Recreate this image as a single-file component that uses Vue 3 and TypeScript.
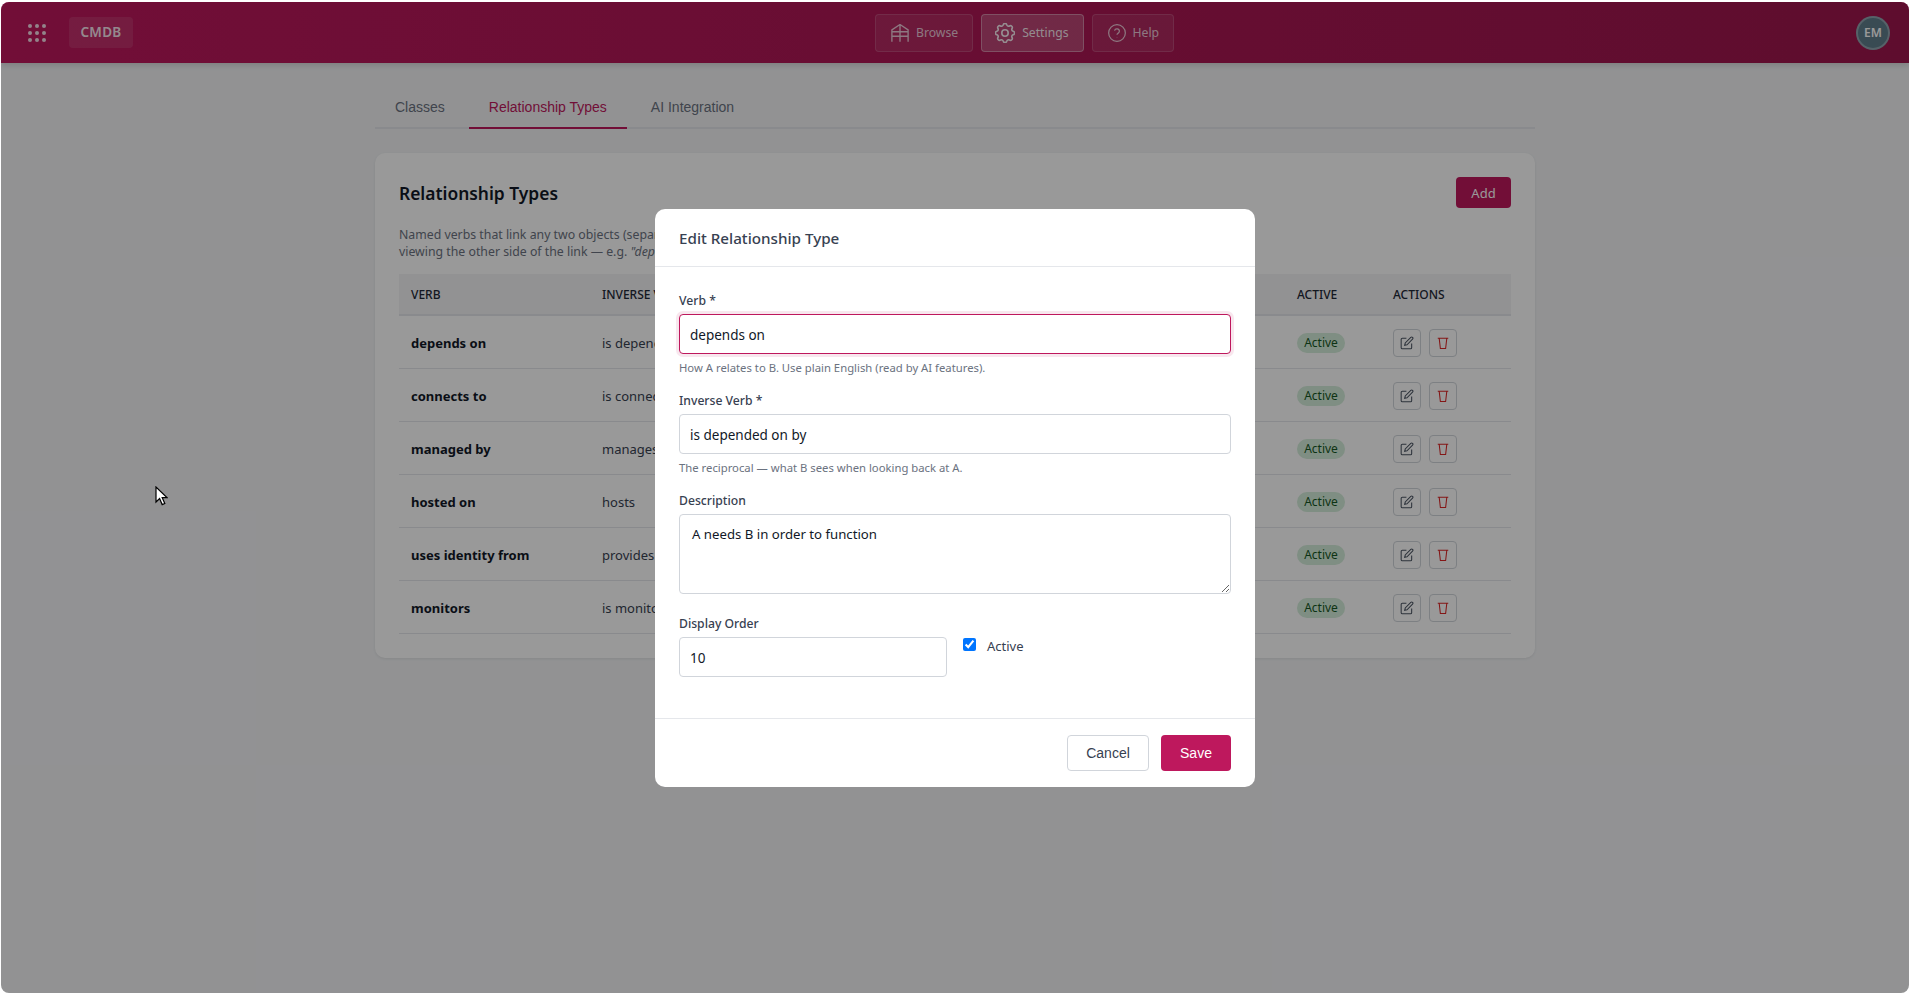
<script setup lang="ts">
import { ref } from 'vue'

interface RelType {
  verb: string
  inverse: string
  description: string
  order: number
}

const relTypes: RelType[] = [
  { verb: 'depends on', inverse: 'is depended on by', description: 'A needs B in order to function', order: 10 },
  { verb: 'connects to', inverse: 'is connected from', description: 'A has a network link to B', order: 20 },
  { verb: 'managed by', inverse: 'manages', description: 'A is administered by B', order: 30 },
  { verb: 'hosted on', inverse: 'hosts', description: 'A runs on B', order: 40 },
  { verb: 'uses identity from', inverse: 'provides identity for', description: 'A signs in through B', order: 50 },
  { verb: 'monitors', inverse: 'is monitored by', description: 'A watches B', order: 60 }
]

const tabs = ['Classes', 'Relationship Types', 'AI Integration']
const dots = Array.from({ length: 9 }, (_, i) => i)

const verb = ref('depends on')
const inverse = ref('is depended on by')
const description = ref('A needs B in order to function')
const displayOrder = ref(10)
const active = ref(true)
</script>

<template>
  <div class="frame">
    <header class="topbar">
      <div class="apps">
        <span v-for="d in dots" :key="d" class="dot"></span>
      </div>
      <div class="brand">CMDB</div>
      <nav class="nav">
        <a class="nav-item">
          <svg class="nav-icon" viewBox="2.4 2.4 19.2 20">
            <path d="M3 22V9l9-6 9 6v13M12 3v19M3 11h18M3 16h18" />
          </svg>
          Browse
        </a>
        <a class="nav-item current">
          <svg class="nav-icon big" viewBox="2.6 2.6 18.8 18.8">
            <path d="M10.325 4.317c.426-1.756 2.924-1.756 3.35 0a1.724 1.724 0 0 0 2.573 1.066c1.543-.94 3.31.826 2.37 2.37a1.724 1.724 0 0 0 1.065 2.572c1.756.426 1.756 2.924 0 3.35a1.724 1.724 0 0 0-1.066 2.573c.94 1.543-.826 3.31-2.37 2.37a1.724 1.724 0 0 0-2.572 1.065c-.426 1.756-2.924 1.756-3.35 0a1.724 1.724 0 0 0-2.573-1.066c-1.543.94-3.31-.826-2.37-2.37a1.724 1.724 0 0 0-1.065-2.572c-1.756-.426-1.756-2.924 0-3.35a1.724 1.724 0 0 0 1.066-2.573c-.94-1.543.826-3.31 2.37-2.37.996.608 2.296.07 2.572-1.065z" />
            <circle cx="12" cy="12" r="3" />
          </svg>
          Settings
        </a>
        <a class="nav-item">
          <svg class="nav-icon" viewBox="1 1 22 22">
            <circle cx="12" cy="12" r="10.2" />
            <path d="M9 9.2a3 3 0 0 1 5.9.8c0 2-2.9 2.6-2.9 4.2M12 17.4v.4" />
          </svg>
          Help
        </a>
      </nav>
      <div class="avatar">EM</div>
    </header>

    <main class="content">
      <div class="tabs">
        <button v-for="t in tabs" :key="t" class="tab" :class="{ on: t === 'Relationship Types' }">{{ t }}</button>
      </div>

      <section class="card">
        <div class="card-head">
          <h2>Relationship Types</h2>
          <button class="add-btn">Add</button>
        </div>
        <p class="card-desc">
          Named verbs that link any two objects (separate from class rules). Each verb has an inverse, used when<br />
          viewing the other side of the link — e.g. <em>"depends on"</em> and <em>"is depended on by"</em>.
        </p>
        <table class="types">
          <colgroup>
            <col class="c-verb" />
            <col class="c-inverse" />
            <col />
            <col class="c-order" />
            <col class="c-active" />
            <col class="c-actions" />
          </colgroup>
          <thead>
            <tr>
              <th>Verb</th>
              <th>Inverse Verb</th>
              <th>Description</th>
              <th>Order</th>
              <th>Active</th>
              <th>Actions</th>
            </tr>
          </thead>
          <tbody>
            <tr v-for="r in relTypes" :key="r.verb">
              <td class="verb">{{ r.verb }}</td>
              <td>{{ r.inverse }}</td>
              <td>{{ r.description }}</td>
              <td>{{ r.order }}</td>
              <td><span class="badge">Active</span></td>
              <td>
                <div class="row-actions">
                  <button class="icon-btn">
                    <svg viewBox="0 0 24 24">
                      <path d="M11 4H4a2 2 0 0 0-2 2v14a2 2 0 0 0 2 2h14a2 2 0 0 0 2-2v-7" />
                      <path d="M18.5 2.5a2.121 2.121 0 0 1 3 3L12 15l-4 1 1-4 9.5-9.5z" />
                    </svg>
                  </button>
                  <button class="icon-btn danger">
                    <svg viewBox="0 0 24 24">
                      <path d="M3 4h18M5.5 4l2 17.5h9l2-17.5" />
                    </svg>
                  </button>
                </div>
              </td>
            </tr>
          </tbody>
        </table>
      </section>
    </main>

    <div class="overlay">
      <div class="modal">
        <div class="modal-head">Edit Relationship Type</div>
        <div class="modal-body">
          <div class="field">
            <label>Verb *</label>
            <input v-model="verb" class="input focus" type="text" />
            <small>How A relates to B. Use plain English (read by AI features).</small>
          </div>
          <div class="field">
            <label>Inverse Verb *</label>
            <input v-model="inverse" class="input" type="text" />
            <small>The reciprocal — what B sees when looking back at A.</small>
          </div>
          <div class="field">
            <label>Description</label>
            <textarea v-model="description" class="input area"></textarea>
          </div>
          <div class="split">
            <div class="field">
              <label>Display Order</label>
              <input v-model="displayOrder" class="input" type="text" />
            </div>
            <label class="check">
              <input v-model="active" type="checkbox" />
              <span>Active</span>
            </label>
          </div>
        </div>
        <div class="modal-foot">
          <button class="btn ghost">Cancel</button>
          <button class="btn primary">Save</button>
        </div>
      </div>
    </div>

    <svg class="cursor" viewBox="0 0 13 20">
      <path d="M1 1v15l3.6-3.4 2.6 6 2.6-1.1-2.6-5.8h5z" />
    </svg>
  </div>
</template>

<style>
html,
body {
  margin: 0;
  height: 100%;
  background: #fff;
}
</style>

<style scoped>
.frame {
  position: fixed;
  top: 2px;
  left: 1px;
  right: 1px;
  bottom: 0;
  overflow: hidden;
  border-radius: 8px;
  background: #f3f4f6;
  font-family: "Noto Sans", "Open Sans", sans-serif;
  color: #374151;
}

.topbar {
  height: 61px;
  display: flex;
  align-items: center;
  padding: 0 19px 0 27px;
  background: linear-gradient(90deg, #be185d, #9d174d);
  box-shadow: 0 2px 6px rgba(0, 0, 0, 0.15);
  color: #fff;
}

.apps {
  width: 18px;
  display: grid;
  grid-template-columns: repeat(3, 4px);
  gap: 3px;
}

.dot {
  width: 4px;
  height: 4px;
  border-radius: 50%;
  background: rgba(255, 255, 255, 0.85);
}

.brand {
  margin-left: 23px;
  width: 64px;
  height: 31px;
  line-height: 31px;
  text-align: center;
  border-radius: 4px;
  background: rgba(255, 255, 255, 0.1);
  font-size: 13.5px;
  font-weight: 600;
  letter-spacing: 0.3px;
  color: rgba(255, 255, 255, 0.9);
}

.nav {
  margin-left: 742px;
  display: flex;
  gap: 8px;
}

.nav-item {
  height: 38px;
  box-sizing: border-box;
  display: flex;
  align-items: center;
  gap: 7px;
  padding: 0 14px 0 15px;
  border: 1px solid rgba(255, 255, 255, 0.15);
  border-radius: 4px;
  background: rgba(255, 255, 255, 0.08);
  font-size: 12.2px;
  color: rgba(255, 255, 255, 0.75);
}

.nav-item.current {
  padding: 0 14px 0 13px;
  background: rgba(255, 255, 255, 0.2);
  border-color: rgba(255, 255, 255, 0.35);
  color: rgba(255, 255, 255, 0.9);
}

.nav-icon {
  width: 18px;
  height: 18px;
  fill: none;
  stroke: currentColor;
  stroke-width: 1.5;
}

.nav-icon.big {
  width: 20px;
  height: 20px;
}

.avatar {
  margin-left: auto;
  width: 34px;
  height: 34px;
  box-sizing: border-box;
  display: flex;
  align-items: center;
  justify-content: center;
  border-radius: 50%;
  border: 2px solid rgba(255, 255, 255, 0.3);
  background: #607d8b;
  font-size: 12px;
  font-weight: 600;
  color: #fff;
}

.content {
  width: 1160px;
  margin: 0 auto;
  padding-top: 24px;
}

.tabs {
  display: flex;
  gap: 4px;
  border-bottom: 2px solid #e5e7eb;
  margin-bottom: 24px;
}

.tab {
  padding: 12px 20px;
  margin-bottom: -2px;
  border: 0;
  border-bottom: 2px solid transparent;
  background: none;
  line-height: 16px;
  font-family: "Liberation Sans", Arial, sans-serif;
  font-size: 14px;
  color: #6b7280;
}

.tab.on {
  color: #be185d;
  border-bottom-color: #be185d;
}

.card {
  background: #fff;
  border-radius: 10px;
  padding: 24px;
  box-shadow: 0 1px 3px rgba(0, 0, 0, 0.08);
}

.card-head {
  display: flex;
  justify-content: space-between;
  align-items: flex-start;
}

.card-head h2 {
  margin: 0 0 1px;
  font-size: 17.4px;
  line-height: 33px;
  font-weight: 600;
  color: #111827;
}

.add-btn {
  width: 55px;
  height: 31px;
  border: 0;
  border-radius: 4px;
  background: #be185d;
  font-family: inherit;
  font-size: 13px;
  color: #fff;
}

.card-desc {
  margin: 15px 0 14px;
  max-width: 850px;
  font-size: 12.3px;
  line-height: 17px;
  color: #6b7280;
  white-space: nowrap;
}

.types {
  width: 100%;
  table-layout: fixed;
  border-collapse: collapse;
}

.c-verb {
  width: 191px;
}

.c-inverse {
  width: 200px;
}

.c-order {
  width: 100px;
}

.c-active {
  width: 96px;
}

.c-actions {
  width: 130px;
}

.types th {
  height: 40px;
  padding: 0 12px;
  text-align: left;
  background: #f3f4f6;
  border-bottom: 2px solid #e5e7eb;
  font-size: 12px;
  font-weight: 500;
  text-transform: uppercase;
  color: #1f2937;
}

.types td {
  height: 50px;
  padding: 2px 12px 0;
  border-bottom: 1px solid #e5e7eb;
  font-size: 13px;
  white-space: nowrap;
  overflow: hidden;
}

.types td.verb {
  font-weight: 700;
  color: #111827;
}

.badge {
  display: inline-block;
  width: 48px;
  height: 20px;
  line-height: 20px;
  text-align: center;
  border-radius: 10px;
  background: #d4edda;
  font-size: 12px;
  color: #155724;
}

.row-actions {
  display: flex;
  gap: 8px;
}

.icon-btn {
  width: 28px;
  height: 28px;
  padding: 0;
  display: flex;
  align-items: center;
  justify-content: center;
  border: 1px solid #d1d5db;
  border-radius: 4px;
  background: transparent;
  color: #4b5563;
}

.icon-btn svg {
  width: 14px;
  height: 14px;
  fill: none;
  stroke: currentColor;
  stroke-width: 1.8;
}

.icon-btn.danger {
  color: #dc2626;
}

.overlay {
  position: absolute;
  inset: 0;
  display: flex;
  align-items: center;
  justify-content: center;
  background: rgba(0, 0, 0, 0.4);
}

.modal {
  width: 600px;
  height: 578px;
  display: flex;
  flex-direction: column;
  background: #fff;
  border-radius: 10px;
}

.modal-head {
  height: 58px;
  box-sizing: border-box;
  padding: 0 24px;
  line-height: 58px;
  border-bottom: 1px solid #e5e7eb;
  font-size: 15.2px;
  font-weight: 500;
  color: #374151;
}

.modal-body {
  flex: 1;
  padding: 25px 24px 0;
}

.field {
  display: flex;
  flex-direction: column;
  margin-bottom: 17px;
}

.split .field {
  margin-bottom: 0;
}

.field label {
  height: 16px;
  line-height: 18px;
  margin-bottom: 6px;
  font-size: 12.2px;
  font-weight: 500;
  color: #374151;
}

.field small {
  margin-top: 5px;
  height: 16px;
  line-height: 18px;
  font-size: 11.3px;
  color: #6b7280;
}

.input {
  box-sizing: border-box;
  width: 100%;
  height: 40px;
  padding: 2px 10px 0;
  border: 1px solid #d1d5db;
  border-radius: 4px;
  outline: none;
  font-family: inherit;
  font-size: 13.5px;
  color: #111827;
}

.input.focus {
  border-color: #be185d;
  box-shadow: 0 0 0 3px rgba(190, 24, 93, 0.1);
}

.input.area {
  height: 80px;
  padding: 10px 12px;
  font-size: 13.2px;
  resize: vertical;
  display: block;
}

.split {
  display: grid;
  grid-template-columns: 1fr 1fr;
  gap: 16px;
  margin-top: 21px;
}

.check {
  display: flex;
  align-items: flex-start;
  padding-top: 22px;
  font-size: 13px;
  color: #374151;
}

.check input {
  width: 13px;
  height: 13px;
  margin: 1px 11px 0 0;
}

.check span {
  line-height: 18px;
}

.modal-foot {
  height: 69px;
  box-sizing: border-box;
  padding: 16px 24px;
  display: flex;
  justify-content: flex-end;
  gap: 12px;
  border-top: 1px solid #e5e7eb;
}

.btn {
  height: 36px;
  border-radius: 4px;
  font-family: "Liberation Sans", Arial, sans-serif;
  font-size: 14px;
}

.btn.ghost {
  width: 82px;
  border: 1px solid #d1d5db;
  background: #fff;
  color: #374151;
}

.btn.primary {
  width: 70px;
  border: 0;
  background: #be185d;
  color: #fff;
  font-weight: 500;
}

.cursor {
  position: absolute;
  left: 154px;
  top: 484px;
  width: 13px;
  height: 20px;
  fill: #fff;
  stroke: #000;
  stroke-width: 1.2;
}
</style>
